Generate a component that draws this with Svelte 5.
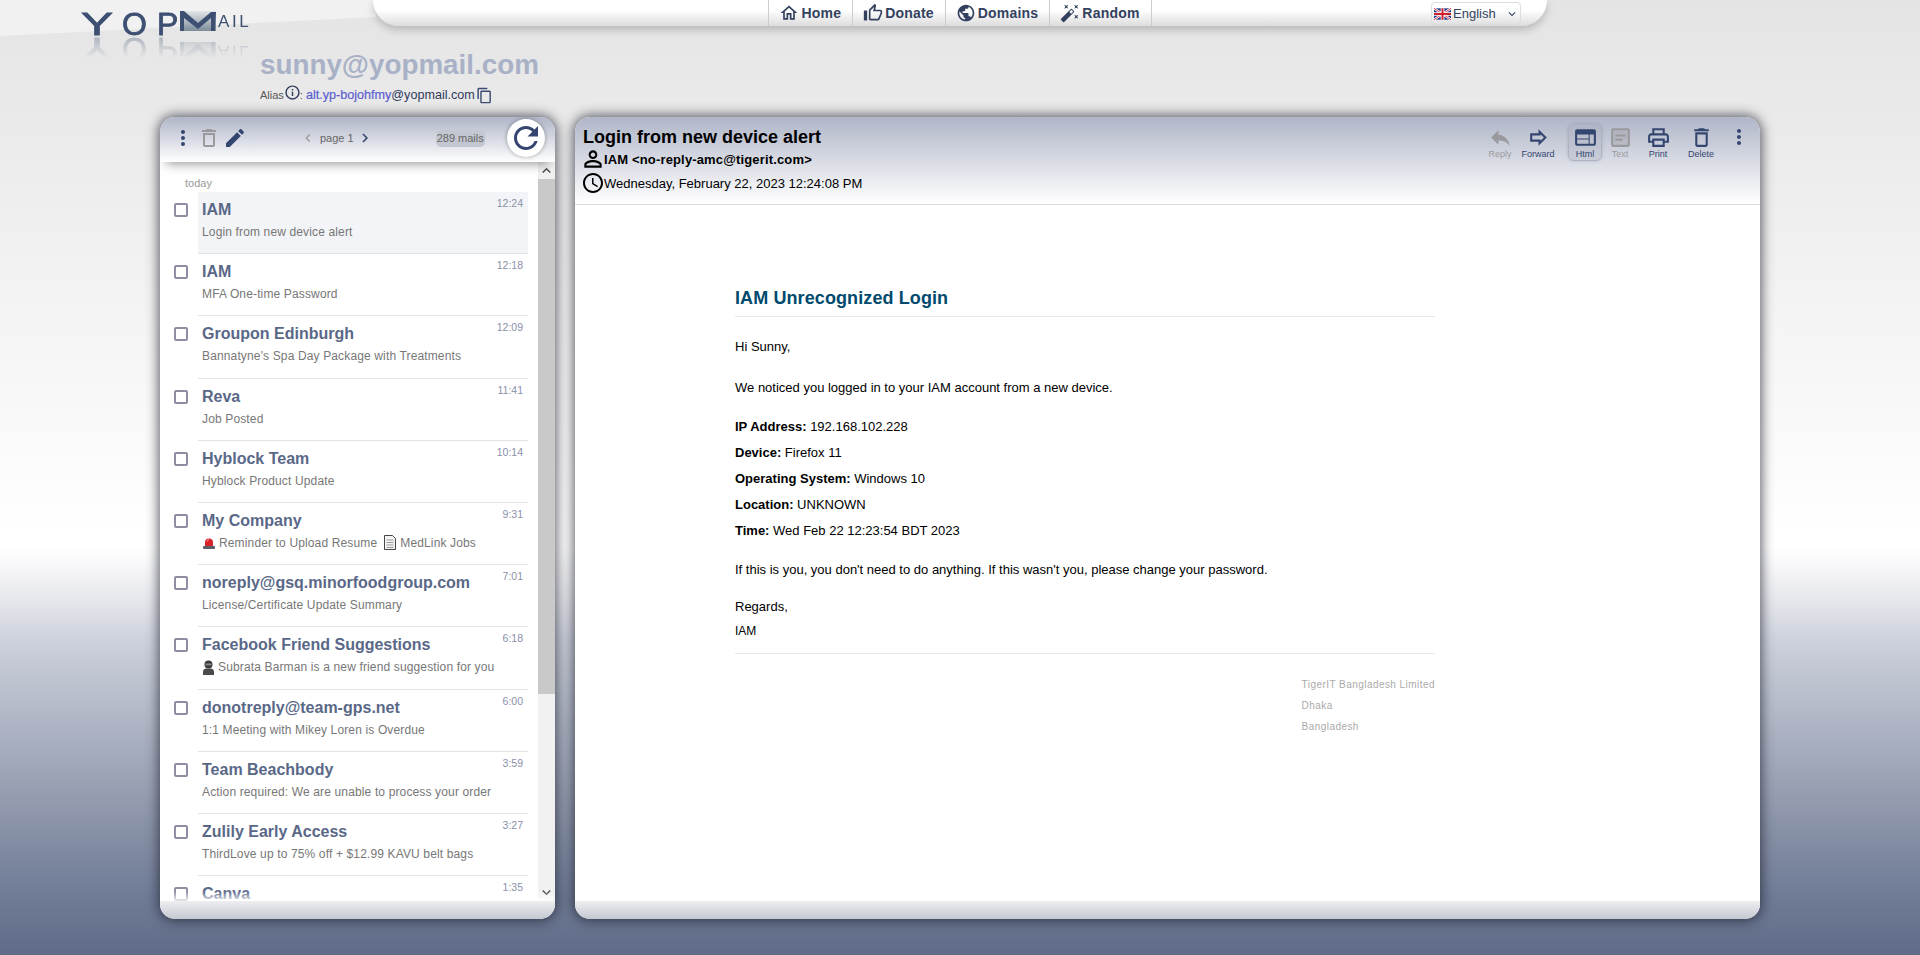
<script>
  const mails = [
    { name: 'IAM', subject: 'Login from new device alert', time: '12:24', active: true },
    { name: 'IAM', subject: 'MFA One-time Password', time: '12:18' },
    { name: 'Groupon Edinburgh', subject: "Bannatyne's Spa Day Package with Treatments", time: '12:09' },
    { name: 'Reva', subject: 'Job Posted', time: '11:41' },
    { name: 'Hyblock Team', subject: 'Hyblock Product Update', time: '10:14' },
    { name: 'My Company', subject: 'Reminder to Upload Resume', after: 'MedLink Jobs', icon: 'siren', time: '9:31' },
    { name: 'noreply@gsq.minorfoodgroup.com', subject: 'License/Certificate Update Summary', time: '7:01' },
    { name: 'Facebook Friend Suggestions', subject: 'Subrata Barman is a new friend suggestion for you', icon: 'ninja', time: '6:18' },
    { name: 'donotreply@team-gps.net', subject: '1:1 Meeting with Mikey Loren is Overdue', time: '6:00' },
    { name: 'Team Beachbody', subject: 'Action required: We are unable to process your order', time: '3:59' },
    { name: 'Zulily Early Access', subject: 'ThirdLove up to 75% off + $12.99 KAVU belt bags', time: '3:27' },
    { name: 'Canva', subject: '', time: '1:35' }
  ];

  const icons = {
    dots: 'M12 8c1.1 0 2-.9 2-2s-.9-2-2-2-2 .9-2 2 .9 2 2 2zm0 2c-1.1 0-2 .9-2 2s.9 2 2 2 2-.9 2-2-.9-2-2-2zm0 6c-1.1 0-2 .9-2 2s.9 2 2 2 2-.9 2-2-.9-2-2-2z',
    trash: 'M6 19c0 1.1.9 2 2 2h8c1.1 0 2-.9 2-2V7H6v12zM8 9h8v10H8V9zm7.5-5l-1-1h-5l-1 1H5v2h14V4h-3.5z',
    edit: 'M3 17.25V21h3.75L17.81 9.94l-3.75-3.75L3 17.25zM20.71 7.04c.39-.39.39-1.02 0-1.41l-2.34-2.34c-.39-.39-1.02-.39-1.41 0l-1.83 1.83 3.75 3.75 1.83-1.83z',
    refresh: 'M17.65 6.35C16.2 4.9 14.21 4 12 4c-4.42 0-7.99 3.58-7.99 8s3.57 8 7.99 8c3.73 0 6.84-2.55 7.73-6h-2.08c-.82 2.33-3.04 4-5.65 4-3.31 0-6-2.69-6-6s2.69-6 6-6c1.66 0 3.14.69 4.22 1.78L13 11h7V4l-2.35 2.35z',
    left: 'M15.41 7.41L14 6l-6 6 6 6 1.41-1.41L10.83 12z',
    right: 'M10 6L8.59 7.41 13.17 12l-4.58 4.59L10 18l6-6z',
    up: 'M12 8l-6 6 1.41 1.41L12 10.83l4.59 4.58L18 14z',
    down: 'M16.59 8.59L12 13.17 7.41 8.59 6 10l6 6 6-6z',
    reply: 'M10 9V5l-7 7 7 7v-4.1c5 0 8.5 1.6 11 5.1-1-5-4-10-11-11z',
    forward: 'M14 8.83L17.17 12 14 15.17V14H6v-4h8V8.83M12 4v4H4v8h8v4l8-8-8-8z',
    html: 'M20 4H4c-1.1 0-1.99.9-1.99 2L2 18c0 1.1.9 2 2 2h16c1.1 0 2-.9 2-2V6c0-1.1-.9-2-2-2zm-5 14H4v-4h11v4zm0-5H4V9h11v4zm5 5h-4V9h4v9z',
    text: 'M19 5v14H5V5h14m0-2H5c-1.1 0-2 .9-2 2v14c0 1.1.9 2 2 2h14c1.1 0 2-.9 2-2V5c0-1.1-.9-2-2-2zM17 9H7v2h10zM14 13H7v2h7z',
    print: 'M19 8h-1V3H6v5H5c-1.66 0-3 1.34-3 3v6h4v4h12v-4h4v-6c0-1.66-1.34-3-3-3zM8 5h8v3H8V5zm8 12v2H8v-4h8v2zm2-2v-2H6v2H4v-4c0-.55.45-1 1-1h14c.55 0 1 .45 1 1v4h-2z',
    person: 'M12 5.9c1.16 0 2.1.94 2.1 2.1s-.94 2.1-2.1 2.1S9.9 9.16 9.9 8s.94-2.1 2.1-2.1m0 9c2.97 0 6.1 1.46 6.1 2.1v1.1H5.9V17c0-.64 3.13-2.1 6.1-2.1M12 4C9.79 4 8 5.79 8 8s1.79 4 4 4 4-1.79 4-4-1.79-4-4-4zm0 9c-2.67 0-8 1.34-8 4v3h16v-3c0-2.66-5.33-4-8-4z',
    clock: 'M11.99 2C6.47 2 2 6.48 2 12s4.47 10 9.99 10C17.52 22 22 17.52 22 12S17.52 2 11.99 2zM12 20c-4.42 0-8-3.58-8-8s3.58-8 8-8 8 3.58 8 8-3.58 8-8 8zm.5-13H11v6l5.25 3.15.75-1.23-4.5-2.67z',
    home: 'M12 5.69l5 4.5V18h-2v-6H9v6H7v-7.81l5-4.5M12 3L2 12h3v8h6v-6h2v6h6v-8h3L12 3z',
    thumb: 'M9 21h9c.83 0 1.54-.5 1.84-1.22l3.02-7.05c.09-.23.14-.47.14-.73v-2c0-1.1-.9-2-2-2h-6.31l.95-4.57.03-.32c0-.41-.17-.79-.44-1.06L14.17 1 7.58 7.59C7.22 7.95 7 8.45 7 9v10c0 1.1.9 2 2 2zM9 9l4.34-4.34L12 10h9v2l-3 7H9V9zM1 9h4v12H1z',
    globe: 'M12 2C6.48 2 2 6.48 2 12s4.48 10 10 10 10-4.48 10-10S17.52 2 12 2zm-1 17.93c-3.95-.49-7-3.85-7-7.93 0-.62.08-1.21.21-1.79L9 15v1c0 1.1.9 2 2 2v1.93zm6.9-2.54c-.26-.81-1-1.39-1.9-1.39h-1v-3c0-.55-.45-1-1-1H8v-2h2c.55 0 1-.45 1-1V7h2c1.1 0 2-.9 2-2v-.41c2.93 1.19 5 4.06 5 7.41 0 2.08-.8 3.97-2.1 5.39z',
    wand: 'M7.5 5.6L10 7 8.6 4.5 10 2 7.5 3.4 5 2l1.4 2.5L5 7zm12 9.8L17 14l1.4 2.5L17 19l2.5-1.4L22 19l-1.4-2.5L22 14zM22 2l-2.5 1.4L17 2l1.4 2.5L17 7l2.5-1.4L22 7l-1.4-2.5zm-7.63 5.29c-.39-.39-1.02-.39-1.41 0L1.29 18.96c-.39.39-.39 1.02 0 1.41l2.34 2.34c.39.39 1.02.39 1.41 0L16.7 11.05c.39-.39.39-1.02 0-1.41l-2.33-2.35zm-1.03 5.49l-2.12-2.12 2.44-2.44 2.12 2.12-2.44 2.44z',
    copy: 'M16 1H4c-1.1 0-2 .9-2 2v14h2V3h12V1zm3 4H8c-1.1 0-2 .9-2 2v14c0 1.1.9 2 2 2h11c1.1 0 2-.9 2-2V7c0-1.1-.9-2-2-2zm0 16H8V7h11v14z',
    info: 'M11 7h2v2h-2zm0 4h2v6h-2zm1-9C6.48 2 2 6.48 2 12s4.48 10 10 10 10-4.48 10-10S17.52 2 12 2zm0 18c-4.41 0-8-3.59-8-8s3.59-8 8-8 8 3.59 8 8-3.59 8-8 8z'
  };

  const navItems = [
    { label: 'Home', icon: 'home' },
    { label: 'Donate', icon: 'thumb' },
    { label: 'Domains', icon: 'globe' },
    { label: 'Random', icon: 'wand' }
  ];

  const actions = [
    { label: 'Reply', icon: 'reply', off: true, cls: 'a-reply' },
    { label: 'Forward', icon: 'forward', cls: 'a-forward' },
    { label: 'Html', icon: 'html', on: true, cls: 'a-html' },
    { label: 'Text', icon: 'text', off: true, cls: 'a-text' },
    { label: 'Print', icon: 'print', cls: 'a-print' },
    { label: 'Delete', icon: 'trash', cls: 'a-delete' }
  ];
</script>

{#snippet icon(name, size, cls = '')}
  <svg class={cls} width={size} height={size} viewBox="0 0 24 24" fill="currentColor">
    {#if name === 'text'}<rect x="4" y="4" width="16" height="16" opacity="0.35" />{/if}
    <path d={icons[name]} fill-rule="evenodd" />
  </svg>
{/snippet}

<div class="page">
  <div class="band"></div>

  <header class="top">
    <div class="top-row">
      <div class="logo">
        <div class="logo-word">
          <span class="ly">Y</span>
          <span class="lo">O</span>
          <span class="lp">P</span>
          <svg class="envelope" width="36" height="20" viewBox="0 0 36 20">
            <defs>
              <linearGradient id="env" x1="0" y1="0" x2="0" y2="1">
                <stop offset="0" stop-color="#e3e6e8" />
                <stop offset="1" stop-color="#7d8d9b" />
              </linearGradient>
            </defs>
            <rect x="0" y="0" width="36" height="20" fill="url(#env)" />
            <path d="M0 0h4l14 12L31 1h5l-1 19h-4V7L18 18 4 7v13H0z" fill="#3d5072" />
          </svg>
          <span class="ail">AIL</span>
        </div>
      </div>
      <nav class="nav">
        <div></div>
        <div class="nav-items">
          {#each navItems as item}
            <a class="nav-item">{@render icon(item.icon, 20)}{item.label}</a>
          {/each}
        </div>
        <div class="lang-wrap">
          <div class="lang">
            <svg width="17" height="12" viewBox="0 0 60 40">
              <rect width="60" height="40" fill="#1f3a8a" />
              <path d="M0 0L60 40M60 0L0 40" stroke="#fff" stroke-width="8" />
              <path d="M0 0L60 40M60 0L0 40" stroke="#d0202e" stroke-width="3" />
              <path d="M30 0v40M0 20h60" stroke="#fff" stroke-width="13" />
              <path d="M30 0v40M0 20h60" stroke="#d0202e" stroke-width="7" />
            </svg>
            <span>English</span>
            <svg class="caret" width="14" height="14" viewBox="0 0 24 24" fill="currentColor"><path d={icons.down} /></svg>
          </div>
        </div>
      </nav>
    </div>
    <div class="account">
      <div class="address">sunny@yopmail.com</div>
      <div class="alias">
        <span class="alias-label">Alias</span>
        {@render icon('info', 17, 'alias-info')}
        <span class="alias-label colon">:</span>
        <b class="alias-name">alt.yp-bojohfmy</b><span class="alias-domain">@yopmail.com</span>
        {@render icon('copy', 17, 'alias-copy')}
      </div>
    </div>
  </header>

  <main class="panels">
    <section class="panel inbox">
      <div class="inbox-head">
        {@render icon('dots', 24, 'navy')}
        {@render icon('trash', 24, 'muted tool')}
        {@render icon('edit', 24, 'navy tool')}
        <div class="pager">
          {@render icon('left', 16, 'muted')}
          <span>page 1</span>
          {@render icon('right', 18, 'navy page-next')}
        </div>
        <span class="count">289 mails</span>
        <button class="refresh">{@render icon('refresh', 36)}</button>
      </div>

      <div class="inbox-body">
        <div class="list">
          <div class="day">today</div>
          {#each mails as mail}
            <div class="mail">
              <span class="check"></span>
              <div class="mail-main" class:active={mail.active}>
                <div class="mail-head">
                  <span class="mail-name">{mail.name}</span>
                  <span class="mail-time">{mail.time}</span>
                </div>
                {#if mail.subject}
                  <div class="mail-subject">
                    {#if mail.icon === 'siren'}
                      <svg class="emoji" width="14" height="14" viewBox="0 0 14 14">
                        <path d="M3 10V6.5a4 4 0 0 1 8 0V10z" fill="#d8232a" />
                        <path d="M5 5.5a2.2 2.2 0 0 1 2-2" stroke="#ff9a9a" stroke-width="1" fill="none" />
                        <rect x="1" y="10" width="12" height="3" rx="1" fill="#5b5f68" />
                      </svg>
                    {:else if mail.icon === 'ninja'}
                      <svg class="emoji" width="13" height="15" viewBox="0 0 13 15">
                        <circle cx="6.5" cy="4.5" r="4" fill="#3b3b3b" />
                        <rect x="3.5" y="3.5" width="6" height="1.8" fill="#8a8a8a" />
                        <path d="M1 15v-3a3.5 3.5 0 0 1 3.5-3.5h4A3.5 3.5 0 0 1 12 12v3z" fill="#4a4a4a" />
                      </svg>
                    {/if}
                    <span>{mail.subject}</span>
                    {#if mail.after}
                      <svg class="emoji doc" width="12" height="15" viewBox="0 0 12 15">
                        <path d="M.5.5h8l3 3v11H.5z" fill="#f4f4f4" stroke="#444" />
                        <path d="M2.5 5h7M2.5 7.5h7M2.5 10h7M2.5 12.5h7" stroke="#999" />
                      </svg>
                      <span>{mail.after}</span>
                    {/if}
                  </div>
                {/if}
              </div>
            </div>
          {/each}
        </div>
        <div class="scrollbar">
          <div class="arrow">{@render icon('up', 17)}</div>
          <div class="thumb"></div>
          <div class="track"></div>
          <div class="arrow">{@render icon('down', 17)}</div>
        </div>
      </div>
      <div class="panel-foot"></div>
    </section>

    <section class="panel reader">
      <div class="reader-head">
        <div class="meta">
          <h1>Login from new device alert</h1>
          <div class="from">{@render icon('person', 26)}<span>IAM &lt;no-reply-amc@tigerit.com&gt;</span></div>
          <div class="sent">{@render icon('clock', 24)}<span>Wednesday, February 22, 2023 12:24:08 PM</span></div>
        </div>
        <div class="actions">
          {#each actions as action}
            <div class="action {action.cls}" class:off={action.off} class:on={action.on}>
              {@render icon(action.icon, 25)}
              <span>{action.label}</span>
            </div>
          {/each}
          {@render icon('dots', 24, 'navy more')}
        </div>
      </div>

      <div class="reader-body">
        <article class="letter">
          <h2>IAM Unrecognized Login</h2>
          <p class="hi">Hi Sunny,</p>
          <p class="notice">We noticed you logged in to your IAM account from a new device.</p>
          <ul class="facts">
            <li><b>IP Address:</b> 192.168.102.228</li>
            <li><b>Device:</b> Firefox 11</li>
            <li><b>Operating System:</b> Windows 10</li>
            <li><b>Location:</b> UNKNOWN</li>
            <li><b>Time:</b> Wed Feb 22 12:23:54 BDT 2023</li>
          </ul>
          <p class="ifyou">If this is you, you don't need to do anything. If this wasn't you, please change your password.</p>
          <p class="regards">Regards,</p>
          <p class="sign">IAM</p>
          <div class="company">
            <div>
              <div>TigerIT Bangladesh Limited</div>
              <div>Dhaka</div>
              <div>Bangladesh</div>
            </div>
          </div>
        </article>
      </div>
      <div class="panel-foot"></div>
    </section>
  </main>
</div>

<style>
  :global(body) {
    margin: 0;
    font-family: "Liberation Sans", Arial, sans-serif;
  }

  .page {
    position: relative;
    height: 955px;
    overflow: hidden;
    background: linear-gradient(to bottom, #e4e4e4 0, #fff 535px, #fff 548px, #e6e7ec 600px, #cdd1dc 640px, #9aa2b4 780px, #75809a 880px, #5f6b87 955px);
  }

  .band {
    position: absolute;
    left: 0;
    top: 0;
    width: 376px;
    height: 36px;
    background: #f1f1f1;
    clip-path: polygon(0 0, 100% 0, 100% 47%, 0 100%);
  }

  .top {
    position: relative;
    height: 117px;
  }

  .top-row {
    display: flex;
    height: 26px;
  }

  .logo {
    position: relative;
    width: 292px;
    margin-left: 81px;
    padding-top: 13px;
  }

  /* mirrored copy under the word, fades out after about 30px */
  .logo-word {
    display: flex;
    align-items: flex-start;
    height: 23px;
    color: #3d5072;
    -webkit-box-reflect: below 1px linear-gradient(to bottom, transparent 0, rgba(255, 255, 255, 0) 10%, rgba(255, 255, 255, 0.32) 100%);
  }

  .ly,
  .lo,
  .lp {
    font-size: 32px;
    line-height: 23px;
    -webkit-text-stroke: 0.8px #3d5072;
  }

  .ly {
    display: inline-block;
    width: 41px;
    transform: scaleX(1.5);
    transform-origin: left center;
  }

  .lo {
    width: 35px;
  }

  .lp {
    width: 23px;
  }

  .envelope {
    margin-top: -2px;
  }

  .ail {
    margin: 2px 0 0 2px;
    font-size: 17px;
    line-height: 13px;
    letter-spacing: 2.6px;
  }

  .nav {
    display: grid;
    grid-template-columns: 1fr auto 1fr;
    width: 1174px;
    height: 26px;
    background: linear-gradient(to bottom, #fff 0, #fff 40%, #dcdcdc 100%);
    border-radius: 0 0 26px 26px;
    box-shadow: 0 4px 8px rgba(0, 0, 0, 0.2);
  }

  .nav-items {
    display: flex;
    border-left: 1px solid #ccc;
  }

  .nav-item {
    display: flex;
    align-items: center;
    gap: 2px;
    padding: 0 11px 0 10px;
    border-right: 1px solid #ccc;
    font-size: 14px;
    font-weight: 700;
    letter-spacing: 0.2px;
    color: #33415f;
  }

  .lang-wrap {
    display: flex;
    justify-content: flex-end;
    padding-right: 26px;
  }

  .lang {
    display: flex;
    align-items: center;
    gap: 2px;
    box-sizing: border-box;
    width: 90px;
    height: 23px;
    margin-top: 2px;
    padding-left: 2px;
    border: 1px solid #ddd;
    border-radius: 4px;
    font-size: 13px;
    color: #33415f;
  }

  .caret {
    margin-left: auto;
    margin-right: 1px;
  }

  .account {
    margin: 23px 0 0 260px;
  }

  .address {
    font-size: 27.8px;
    line-height: 31px;
    font-weight: 700;
    color: #a9b1c7;
  }

  .alias {
    display: flex;
    align-items: center;
    height: 16px;
    margin-top: 7px;
    font-size: 12.6px;
    color: #2f3a5c;
  }

  .alias-label {
    font-size: 11px;
    color: #555;
    margin-right: 2px;
  }

  .colon {
    margin: 0 3px 0 1px;
  }

  :global(.alias-info) {
    margin: -6px -2px 0 -2px;
    color: #2f3a5c;
  }

  :global(.alias-copy) {
    margin-left: 1px;
    color: #3a4a70;
  }

  .alias-name {
    color: #5a5fd0;
    font-weight: 400;
    -webkit-text-stroke: 0.2px #5a5fd0;
  }

  .panels {
    display: flex;
    gap: 20px;
    height: 802px;
    padding-left: 160px;
  }

  .panel {
    display: flex;
    flex-direction: column;
    height: 802px;
    background: #fff;
    border-radius: 15px;
    box-shadow: 0 0 12px 2px rgba(30, 32, 45, 0.68);
    overflow: hidden;
  }

  .inbox {
    width: 395px;
  }

  .reader {
    width: 1185px;
  }

  .inbox-head {
    position: relative;
    z-index: 1;
    display: flex;
    align-items: center;
    flex: none;
    box-sizing: border-box;
    height: 45px;
    padding: 0 0 4px 11px;
    background: linear-gradient(to bottom, #b0b6c8, #fff);
    box-shadow: 0 8px 10px -6px rgba(0, 0, 0, 0.4);
  }

  :global(.navy) {
    color: #34466f;
  }

  :global(.muted) {
    color: #9a9a9e;
  }

  :global(.tool) {
    margin-left: 2px;
  }

  .pager {
    display: flex;
    align-items: center;
    gap: 4px;
    margin-left: 53px;
    font-size: 11px;
    color: #666;
  }

  :global(.page-next) {
    margin-left: -2px;
  }

  .count {
    margin: 2px 0 0 62px;
    padding: 0 1px;
    height: 17px;
    line-height: 17px;
    border-radius: 5px;
    background: #c3c7d1;
    font-size: 11px;
    color: #666;
  }

  .refresh {
    display: flex;
    align-items: center;
    justify-content: center;
    flex: none;
    width: 38px;
    height: 38px;
    margin-left: auto;
    margin-right: 10px;
    padding: 0;
    border: 0;
    border-radius: 50%;
    background: #fff;
    color: #34466f;
    box-shadow: 0 0 4px rgba(0, 0, 0, 0.35);
  }

  .inbox-body {
    display: flex;
    flex: 1;
    min-height: 0;
  }

  .list {
    flex: 1;
    overflow: hidden;
  }

  .day {
    height: 30px;
    box-sizing: border-box;
    padding: 12px 0 0 25px;
    font-size: 11px;
    line-height: 18px;
    color: #999;
  }

  .mail {
    display: flex;
    align-items: flex-start;
    height: 62.2px;
    padding-left: 14px;
  }

  .check {
    flex: none;
    box-sizing: border-box;
    width: 14px;
    height: 14px;
    margin-top: 11px;
    border: 2px solid #8f8da3;
    border-radius: 2px;
  }

  .mail-main {
    box-sizing: border-box;
    width: 330px;
    height: 62.2px;
    margin-left: 10px;
    padding: 8px 5px 0 4px;
    border-bottom: 1px solid #e2e4ea;
  }

  .active {
    background: #f3f4f7;
  }

  .mail-head {
    display: flex;
    justify-content: space-between;
  }

  .mail-name {
    font-size: 16px;
    line-height: 19px;
    font-weight: 700;
    color: #5a6888;
  }

  .mail-time {
    margin-top: -3px;
    font-size: 10.5px;
    line-height: 12px;
    color: #8a90a8;
  }

  .mail-subject {
    display: flex;
    align-items: center;
    gap: 3px;
    margin-top: 5px;
    font-size: 12px;
    line-height: 16px;
    letter-spacing: 0.14px;
    color: #777;
    white-space: nowrap;
  }

  .doc {
    margin-left: 4px;
    margin-right: 1px;
  }

  .scrollbar {
    display: flex;
    flex-direction: column;
    flex: none;
    width: 17px;
    background: #f1f1f1;
  }

  .arrow {
    display: flex;
    align-items: center;
    justify-content: center;
    height: 17px;
    color: #4a4a4a;
  }

  .thumb {
    height: 515px;
    background: #c9c9c9;
  }

  .track {
    flex: 1;
  }

  .panel-foot {
    position: relative;
    flex: none;
    height: 18px;
    background: linear-gradient(to bottom, #eeeef0, #c4c8d2);
    box-shadow: 0 -5px 6px rgba(255, 255, 255, 0.8);
  }

  .reader-head {
    display: flex;
    justify-content: space-between;
    flex: none;
    height: 88px;
    box-sizing: border-box;
    padding: 7px 9px 0 8px;
    background: linear-gradient(to bottom, #b0b6c8, #fff);
    border-bottom: 1px solid #ddd;
  }

  .meta {
    padding-top: 3px;
  }

  h1 {
    margin: 0;
    font-size: 18px;
    line-height: 21px;
    color: #000;
  }

  .from {
    display: flex;
    align-items: center;
    height: 22px;
    font-size: 13px;
    font-weight: 700;
    letter-spacing: 0.15px;
  }

  :global(.from svg) {
    margin: 0 -1.5px 0 -3.5px;
  }

  .sent {
    display: flex;
    align-items: center;
    height: 24px;
    margin: 1px 0 0 -2px;
    font-size: 13px;
  }

  :global(.sent svg) {
    margin-right: -1px;
  }

  .actions {
    display: flex;
    align-items: flex-start;
    color: #34466f;
  }

  .action {
    display: flex;
    flex-direction: column;
    align-items: center;
    box-sizing: border-box;
    height: 37px;
    padding-top: 0;
    font-size: 9px;
    line-height: 10px;
    border: 1px solid transparent;
    border-radius: 6px;
  }

  .action span {
    margin-top: -1px;
  }

  .a-reply {
    width: 30px;
  }

  .a-forward {
    width: 46px;
    margin-right: 7px;
  }

  .a-html {
    width: 34px;
  }

  .a-text {
    width: 36px;
  }

  .a-print {
    width: 40px;
  }

  .a-delete {
    width: 46px;
  }

  .on {
    border-color: #aeb3c1;
    background: rgba(150, 155, 175, 0.2);
    box-shadow: 0 0 3px rgba(60, 70, 100, 0.25);
  }

  .off {
    color: #9a9a9e;
  }

  :global(.more) {
    margin: 1px 0 0 3px;
  }

  .reader-body {
    flex: 1;
    min-height: 0;
    padding-left: 160px;
    color: #000;
  }

  .letter {
    width: 700px;
    padding-top: 82px;
    font-size: 13px;
  }

  h2 {
    margin: 0;
    padding-bottom: 6px;
    border-bottom: 1px solid #e8e8e8;
    font-size: 18px;
    line-height: 23px;
    letter-spacing: 0.1px;
    color: #004a6e;
  }

  p {
    margin: 0;
    line-height: 18px;
  }

  .hi {
    margin-top: 21px;
  }

  .notice {
    margin-top: 23px;
  }

  .facts {
    list-style: none;
    margin: 17px 0 0;
    padding: 0;
  }

  .facts li {
    line-height: 26px;
  }

  .ifyou {
    margin-top: 17px;
  }

  .regards {
    margin-top: 19px;
  }

  .sign {
    margin-top: 6px;
    padding-bottom: 13px;
    border-bottom: 1px solid #e8e8e8;
    font-size: 12px;
  }

  .company {
    display: flex;
    justify-content: flex-end;
    padding-top: 20px;
    font-size: 10px;
    line-height: 21px;
    letter-spacing: 0.45px;
    color: #aaa;
  }
</style>
